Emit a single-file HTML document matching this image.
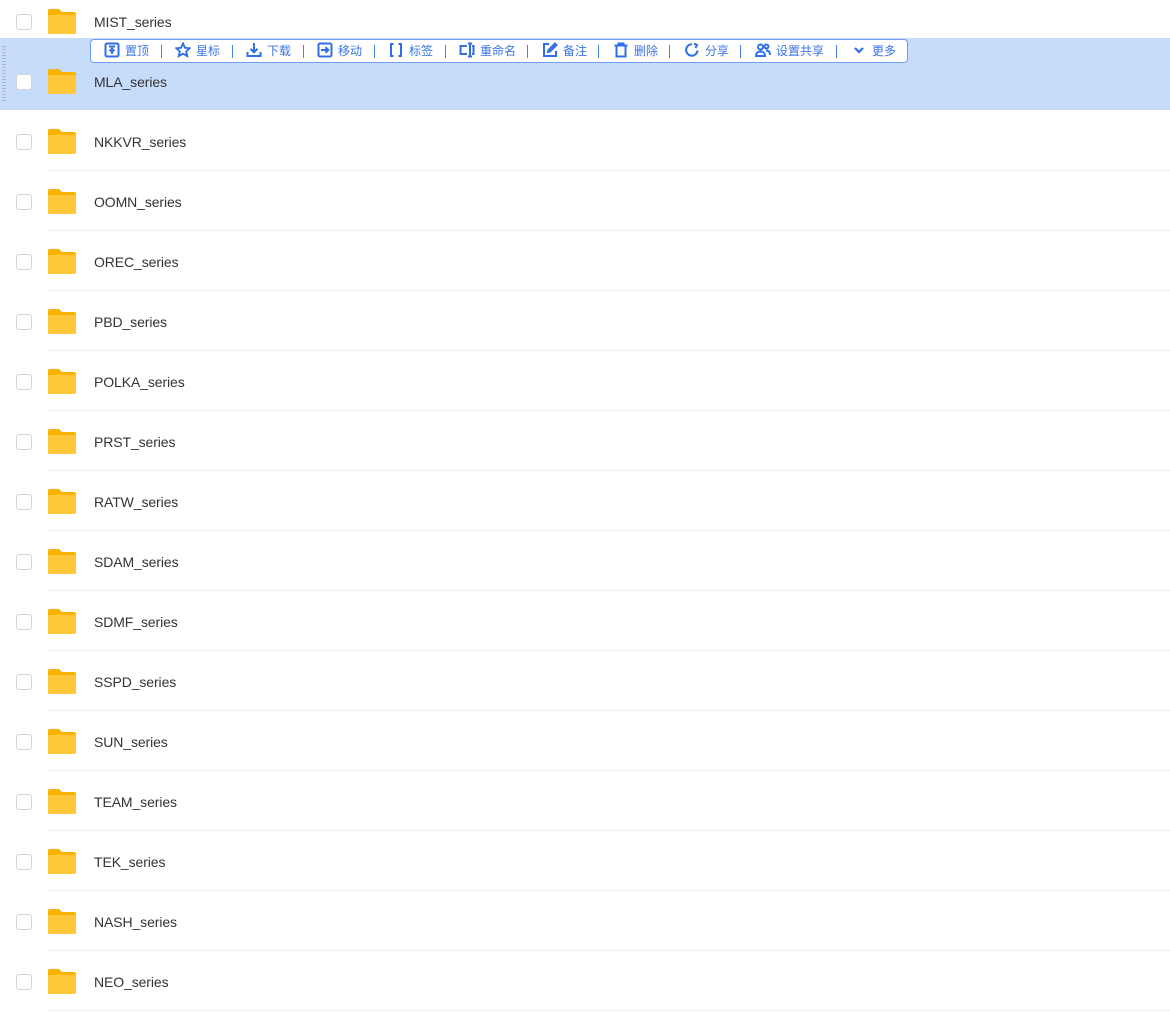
<!DOCTYPE html>
<html><head><meta charset="utf-8"><style>
body{margin:0;width:1170px;height:1012px;background:#fff;font-family:"Liberation Sans","Noto Sans CJK SC",sans-serif;position:relative;overflow:hidden}
.row{position:absolute;left:0;width:1170px;height:60px}
.row .line{position:absolute;left:47px;right:0;bottom:0;height:1px;background:#eeeeee}
.cb{position:absolute;left:16px;width:14px;height:14px;border:1px solid #d6d6d6;border-radius:3px;background:#fff}
.fd{position:absolute;left:48px;width:28px;height:25px}
.nm{position:absolute;left:94px;font-size:14px;color:#333;line-height:16px;letter-spacing:-0.1px}
.hl{position:absolute;left:0;top:38px;width:1170px;height:72px;background:#c7dcfb}
.grip{position:absolute;left:2px;top:46px;width:4px;height:56px;background:repeating-linear-gradient(#aab4c4 0 1px,transparent 1px 3px)}
.tb{position:absolute;left:90px;top:39px;width:816px;height:22px;background:#fff;border:1px solid #6f9cf0;border-radius:4px}
.it{position:absolute;top:3px;font-size:12px;color:#3b74e6;line-height:16px;white-space:nowrap}
.sep{position:absolute;top:5px;width:1px;height:13px;background:#4c7fe8}
svg.ic{position:absolute;top:2px;width:16px;height:16px}
</style></head><body>
<div class="hl"></div><div class="grip"></div>
<div id="rows"></div>
<div class="tb">
<svg class="ic" style="left:13px" viewBox="0 0 16 16" fill="none" stroke="#2f6ee6" stroke-width="2"><rect x="1.5" y="1.5" width="13" height="13" rx="1.5"/><path d="M5 4.5h6M8 12V7M5.5 9.2 8 6.7l2.5 2.5"/></svg><span class="it" style="left:34px">置顶</span><span class="sep" style="left:70px"></span>
<svg class="ic" style="left:84px" viewBox="0 0 16 16" fill="none" stroke="#2f6ee6" stroke-width="1.9"><path d="M8 1.5l2 4.3 4.6.5-3.4 3.1 1 4.6L8 11.7 3.8 14l1-4.6L1.4 6.3 6 5.8z"/></svg><span class="it" style="left:105px">星标</span><span class="sep" style="left:141px"></span>
<svg class="ic" style="left:155px" viewBox="0 0 16 16" fill="none" stroke="#2f6ee6" stroke-width="2"><path d="M8 1v9M4.5 6.8 8 10.3l3.5-3.5M1.5 10v4h13v-4"/></svg><span class="it" style="left:176px">下载</span><span class="sep" style="left:212px"></span>
<svg class="ic" style="left:226px" viewBox="0 0 16 16" fill="none" stroke="#2f6ee6" stroke-width="2"><rect x="1.5" y="1.5" width="13" height="13" rx="1.5"/><path d="M4 8h7M8.5 5.2 11.3 8l-2.8 2.8"/></svg><span class="it" style="left:247px">移动</span><span class="sep" style="left:283px"></span>
<svg class="ic" style="left:297px" viewBox="0 0 16 16" fill="none" stroke="#2f6ee6" stroke-width="2"><path d="M5.5 2H3v12h2.5M10.5 2H13v12h-2.5"/></svg><span class="it" style="left:318px">标签</span><span class="sep" style="left:354px"></span>
<svg class="ic" style="left:368px" viewBox="0 0 16 16" fill="none" stroke="#2f6ee6" stroke-width="2"><path d="M8 4H1.5v8H8M11 1.5v13M9 1.5h4M9 14.5h4M13 4h1.5v8H13"/></svg><span class="it" style="left:389px">重命名</span><span class="sep" style="left:436px"></span>
<svg class="ic" style="left:451px" viewBox="0 0 16 16" fill="none" stroke="#2f6ee6" stroke-width="2"><path d="M7 2H2v12h12V9M13 1.5l1.5 1.5L8 9.5 6 10l.5-2z"/></svg><span class="it" style="left:472px">备注</span><span class="sep" style="left:507px"></span>
<svg class="ic" style="left:522px" viewBox="0 0 16 16" fill="none" stroke="#2f6ee6" stroke-width="2"><path d="M1.5 3.5h13M5.5 3.5V1.5h5v2M3.5 3.5V14.5h9V3.5"/></svg><span class="it" style="left:543px">删除</span><span class="sep" style="left:578px"></span>
<svg class="ic" style="left:593px" viewBox="0 0 16 16" fill="none" stroke="#2f6ee6" stroke-width="2"><path d="M13.5 8.5A5.7 5.7 0 1 1 8 2.3M10 1.5l3 1.5-1.5 3"/></svg><span class="it" style="left:614px">分享</span><span class="sep" style="left:649px"></span>
<svg class="ic" style="left:664px" viewBox="0 0 16 16" fill="none" stroke="#2f6ee6" stroke-width="1.9"><circle cx="5.5" cy="5" r="2.5"/><circle cx="11.5" cy="4.5" r="2"/><path d="M1 14c0-3 2-4.5 4.5-4.5S10 11 10 14zM11 8.5c2.5 0 4 1.5 4 4.5"/></svg><span class="it" style="left:685px">设置共享</span><span class="sep" style="left:745px"></span>
<svg class="ic" style="left:760px" viewBox="0 0 16 16" fill="none" stroke="#2f6ee6" stroke-width="2.2"><path d="M4 6l4 4 4-4"/></svg><span class="it" style="left:781px">更多</span>
</div>
<script>
var n=["MIST","MLA","NKKVR","OOMN","OREC","PBD","POLKA","PRST","RATW","SDAM","SDMF","SSPD","SUN","TEAM","TEK","NASH","NEO"];
var h="";
n.forEach(function(s,i){var c=22+i*60,t=c-31;
h+='<div class="row" style="top:'+t+'px">'+(i>1?'<div class="line"></div>':'')+
'<div class="cb" style="top:23px"></div>'+
'<svg class="fd" style="top:18px" viewBox="0 0 28 25"><path d="M0 2Q0 0 2 0h9l3 3h12q2 0 2 2v18q0 2-2 2H2q-2 0-2-2z" fill="#f9b300"/><path d="M0 6h26q2 0 2 2v15q0 2-2 2H2q-2 0-2-2z" fill="#ffc83a"/></svg>'+
'<div class="nm" style="top:23px">'+s+'_series</div></div>';});
document.getElementById("rows").innerHTML=h;
</script>
</body></html>
